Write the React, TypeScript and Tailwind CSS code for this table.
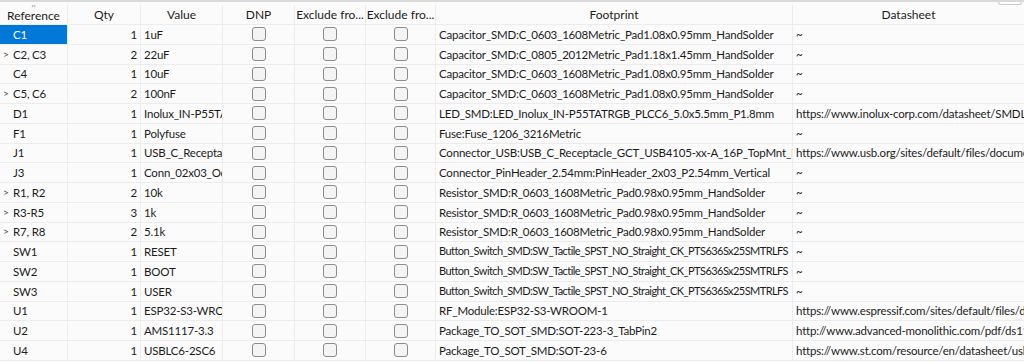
import React from "react";

interface Row {
  ref: string;
  qty: number;
  value: string;
  footprint: string;
  datasheet: string;
  group?: boolean;
  tight?: boolean;
}

const rows: Row[] = [
  { ref: "C1", qty: 1, value: "1uF", footprint: "Capacitor_SMD:C_0603_1608Metric_Pad1.08x0.95mm_HandSolder", datasheet: "~" },
  { ref: "C2, C3", qty: 2, value: "22uF", footprint: "Capacitor_SMD:C_0805_2012Metric_Pad1.18x1.45mm_HandSolder", datasheet: "~", group: true },
  { ref: "C4", qty: 1, value: "10uF", footprint: "Capacitor_SMD:C_0603_1608Metric_Pad1.08x0.95mm_HandSolder", datasheet: "~" },
  { ref: "C5, C6", qty: 2, value: "100nF", footprint: "Capacitor_SMD:C_0603_1608Metric_Pad1.08x0.95mm_HandSolder", datasheet: "~", group: true },
  { ref: "D1", qty: 1, value: "Inolux_IN-P55TATRGB", footprint: "LED_SMD:LED_Inolux_IN-P55TATRGB_PLCC6_5.0x5.5mm_P1.8mm", datasheet: "https://www.inolux-corp.com/datasheet/SMDLED/Addressable%20LED/IN-P55TATRGB.pdf" },
  { ref: "F1", qty: 1, value: "Polyfuse", footprint: "Fuse:Fuse_1206_3216Metric", datasheet: "~" },
  { ref: "J1", qty: 1, value: "USB_C_Receptacle_GCT_USB4105", footprint: "Connector_USB:USB_C_Receptacle_GCT_USB4105-xx-A_16P_TopMnt_Horizontal", datasheet: "https://www.usb.org/sites/default/files/documents/usb_type-c.zip" },
  { ref: "J3", qty: 1, value: "Conn_02x03_Odd_Even", footprint: "Connector_PinHeader_2.54mm:PinHeader_2x03_P2.54mm_Vertical", datasheet: "~" },
  { ref: "R1, R2", qty: 2, value: "10k", footprint: "Resistor_SMD:R_0603_1608Metric_Pad0.98x0.95mm_HandSolder", datasheet: "~", group: true },
  { ref: "R3-R5", qty: 3, value: "1k", footprint: "Resistor_SMD:R_0603_1608Metric_Pad0.98x0.95mm_HandSolder", datasheet: "~", group: true },
  { ref: "R7, R8", qty: 2, value: "5.1k", footprint: "Resistor_SMD:R_0603_1608Metric_Pad0.98x0.95mm_HandSolder", datasheet: "~", group: true },
  { ref: "SW1", qty: 1, value: "RESET", footprint: "Button_Switch_SMD:SW_Tactile_SPST_NO_Straight_CK_PTS636Sx25SMTRLFS", datasheet: "~", tight: true },
  { ref: "SW2", qty: 1, value: "BOOT", footprint: "Button_Switch_SMD:SW_Tactile_SPST_NO_Straight_CK_PTS636Sx25SMTRLFS", datasheet: "~", tight: true },
  { ref: "SW3", qty: 1, value: "USER", footprint: "Button_Switch_SMD:SW_Tactile_SPST_NO_Straight_CK_PTS636Sx25SMTRLFS", datasheet: "~", tight: true },
  { ref: "U1", qty: 1, value: "ESP32-S3-WROOM-1", footprint: "RF_Module:ESP32-S3-WROOM-1", datasheet: "https://www.espressif.com/sites/default/files/documentation/esp32-s3-wroom-1_datasheet_en.pdf" },
  { ref: "U2", qty: 1, value: "AMS1117-3.3", footprint: "Package_TO_SOT_SMD:SOT-223-3_TabPin2", datasheet: "http://www.advanced-monolithic.com/pdf/ds1117.pdf" },
  { ref: "U4", qty: 1, value: "USBLC6-2SC6", footprint: "Package_TO_SOT_SMD:SOT-23-6", datasheet: "https://www.st.com/resource/en/datasheet/usblc6-2.pdf" },
];

const cols = "grid grid-cols-[68px_73px_82px_72px_71px_70px_357px_1fr]";
const cell = "border-r border-[#ececec] overflow-hidden whitespace-nowrap flex items-center";

const Check = () => (
  <div className="w-[14px] h-[14px] rounded-[3px] border border-[#8c8c8c] bg-[#f4f4f4]" />
);

export default function App() {
  return (
    <div
      className="w-[1024px] h-[362px] overflow-hidden bg-[#fbfbfb] text-[11.5px] tracking-[-0.2px] text-[#1b1b1b]"
      style={{ fontFamily: "Lato, 'Noto Sans', sans-serif" }}
    >
      <div className="h-[2px] bg-[#d9d9d9]" />
      <div className="h-[3px] flex justify-end">
        <div className="w-[24px] h-[3px] mr-[2px] border-x border-b border-[#c8c8c8] rounded-b-[3px] bg-white" />
      </div>
      <div className={`${cols} h-[20px] border-b border-[#ececec] text-[12px] tracking-normal`}>
        <div className={`${cell} justify-center relative`}>
          <span className="absolute top-[-4px] left-1/2 -translate-x-1/2 text-[8px] text-[#777]">^</span>
          <span className="pt-[2px]">Reference</span>
        </div>
        <div className={`${cell} justify-center`}>Qty</div>
        <div className={`${cell} justify-center`}>Value</div>
        <div className={`${cell} justify-center`}>DNP</div>
        <div className={`${cell} justify-center`}>Exclude fro...</div>
        <div className={`${cell} justify-center`}>Exclude fro...</div>
        <div className={`${cell} justify-center`}>Footprint</div>
        <div className={`${cell} justify-center border-r-0`}>Datasheet</div>
      </div>
      {rows.map((r, i) => (
        <div key={r.ref} className={`${cols} h-[19.75px] border-b border-[#ececec]`}>
          <div className={`${cell} ${i === 0 ? "bg-[#0078d7] text-white" : ""}`}>
            <span className="w-[13px] pl-[3px] text-[10px] text-[#444]">{r.group ? ">" : ""}</span>
            <span>{r.ref}</span>
          </div>
          <div className={`${cell} justify-end pr-[3px]`}>{r.qty}</div>
          <div className={`${cell} pl-[3px]`}>{r.value}</div>
          <div className={`${cell} justify-center`}><Check /></div>
          <div className={`${cell} justify-center`}><Check /></div>
          <div className={`${cell} justify-center`}><Check /></div>
          <div className={`${cell} pl-[3px] ${r.tight ? "text-[11px] tracking-[-0.55px]" : ""}`}>{r.footprint}</div>
          <div className={`${cell} pl-[3px] border-r-0`}>{r.datasheet}</div>
        </div>
      ))}
    </div>
  );
}
